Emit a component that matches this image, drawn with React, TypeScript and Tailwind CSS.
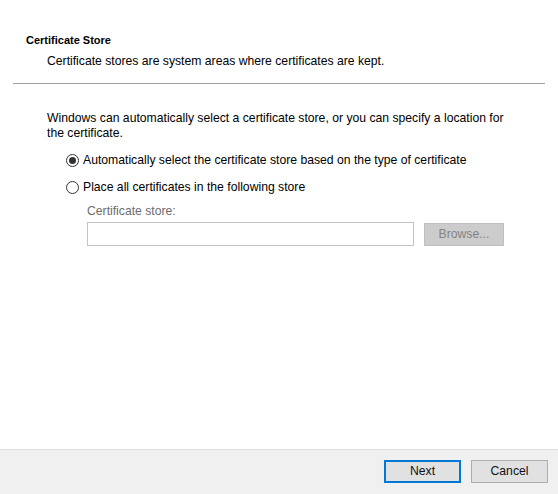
import React from "react";

function Radio({ checked }: { checked: boolean }) {
  return (
    <span className="w-[13px] h-[13px] rounded-full border border-[#333333] bg-white flex items-center justify-center shrink-0">
      {checked && <span className="w-[7px] h-[7px] rounded-full bg-[#333333]" />}
    </span>
  );
}

export default function App() {
  return (
    <div className="w-[558px] h-[494px] flex flex-col bg-white text-black text-[12.2px] leading-[15px] overflow-hidden" style={{ fontFamily: '"Liberation Sans", Arial, sans-serif' }}>
      <div className="flex-1 flex flex-col">
        <div className="pl-[26px] pt-[33px]">
          <div className="font-bold text-[11px]">Certificate Store</div>
          <div className="pl-[21px] mt-[6px]">Certificate stores are system areas where certificates are kept.</div>
        </div>
        <div className="mx-[13px] mt-[14px] h-px bg-[#a0a0a0]" />
        <div className="pl-[47px] pr-[50px] mt-[27px]">
          <div>Windows can automatically select a certificate store, or you can specify a location for the certificate.</div>
          <div className="pl-[19px] mt-[12px] flex items-center gap-[4px] h-[15px]">
            <Radio checked />
            <span>Automatically select the certificate store based on the type of certificate</span>
          </div>
          <div className="pl-[19px] mt-[12px] flex items-center gap-[4px] h-[15px]">
            <Radio checked={false} />
            <span>Place all certificates in the following store</span>
          </div>
          <div className="pl-[40px] mt-[5px]">
            <div className="text-[#6d6d6d] pt-[4px]">Certificate store:</div>
            <div className="flex items-start mt-[3px]">
              <div className="w-[327px] h-[24px] border border-[#c4c4c4] bg-white shrink-0" />
              <div className="ml-[10px] mt-px w-[80px] h-[23px] shrink-0 border border-[#bfbfbf] bg-[#cccccc] text-[#838383] flex items-center justify-center">Browse...</div>
            </div>
          </div>
        </div>
      </div>
      <div className="h-[45px] shrink-0 border-t border-[#dfdfdf] bg-[#f0f0f0] flex justify-end items-start pt-[10px] pr-[10px] gap-[10px]">
        <button className="w-[77px] h-[23px] border-2 border-[#0078d7] bg-[#e1e1e1] flex items-center justify-center text-[#111]">Next</button>
        <button className="w-[77px] h-[23px] border border-[#adadad] bg-[#e1e1e1] flex items-center justify-center text-[#111]">Cancel</button>
      </div>
    </div>
  );
}
